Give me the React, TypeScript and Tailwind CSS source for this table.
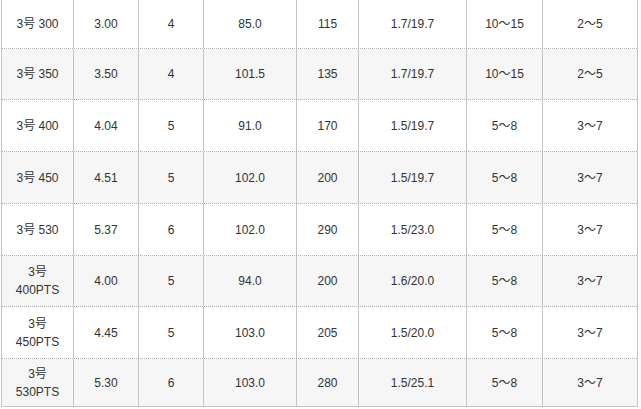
import React from 'react';

// spec rows for the 3号 line-up
const rows: { name: string[]; cells: string[]; h: string; bg: string }[] = [
  { name: ['3号 300'], cells: ['3.00', '4', '85.0', '115', '1.7/19.7', '10～15', '2～5'], h: 'h-[49px]', bg: 'bg-white' },
  { name: ['3号 350'], cells: ['3.50', '4', '101.5', '135', '1.7/19.7', '10～15', '2～5'], h: 'h-[51px]', bg: 'bg-[#f6f6f6]' },
  { name: ['3号 400'], cells: ['4.04', '5', '91.0', '170', '1.5/19.7', '5～8', '3～7'], h: 'h-[52px]', bg: 'bg-white' },
  { name: ['3号 450'], cells: ['4.51', '5', '102.0', '200', '1.5/19.7', '5～8', '3～7'], h: 'h-[52px]', bg: 'bg-[#f6f6f6]' },
  { name: ['3号 530'], cells: ['5.37', '6', '102.0', '290', '1.5/23.0', '5～8', '3～7'], h: 'h-[52px]', bg: 'bg-white' },
  { name: ['3号', '400PTS'], cells: ['4.00', '5', '94.0', '200', '1.6/20.0', '5～8', '3～7'], h: 'h-[51px]', bg: 'bg-[#f6f6f6]' },
  { name: ['3号', '450PTS'], cells: ['4.45', '5', '103.0', '205', '1.5/20.0', '5～8', '3～7'], h: 'h-[52px]', bg: 'bg-white' },
  { name: ['3号', '530PTS'], cells: ['5.30', '6', '103.0', '280', '1.5/25.1', '5～8', '3～7'], h: 'h-[48px]', bg: 'bg-[#f6f6f6]' },
];

export default function App() {
  return (
    <div
      className="w-[641px] h-[409px] overflow-hidden bg-white pl-[1px] text-[12px] leading-[18px] text-[#333]"
      style={{ fontFamily: '"Liberation Sans", "Noto Sans CJK JP", sans-serif' }}
    >
      <div className="w-[637px] border-r border-[#c4c4c4]">
        {rows.map((row, i) => (
          <div
            key={i}
            className={`grid grid-cols-[72px_65px_65px_93px_62px_108px_76px_95px] ${row.h} ${row.bg} ${
              i === rows.length - 1 ? 'border-b border-solid border-[#c4c4c4]' : 'border-b border-dotted border-[#b0b0b0]'
            }`}
          >
            <div className="flex flex-col items-center justify-center border-l border-[#c4c4c4] text-center">
              {row.name.map((n) => (
                <span key={n}>{n}</span>
              ))}
            </div>
            {row.cells.map((c, j) => (
              <div key={j} className="flex items-center justify-center border-l border-[#c4c4c4]">
                {c}
              </div>
            ))}
          </div>
        ))}
      </div>
    </div>
  );
}
